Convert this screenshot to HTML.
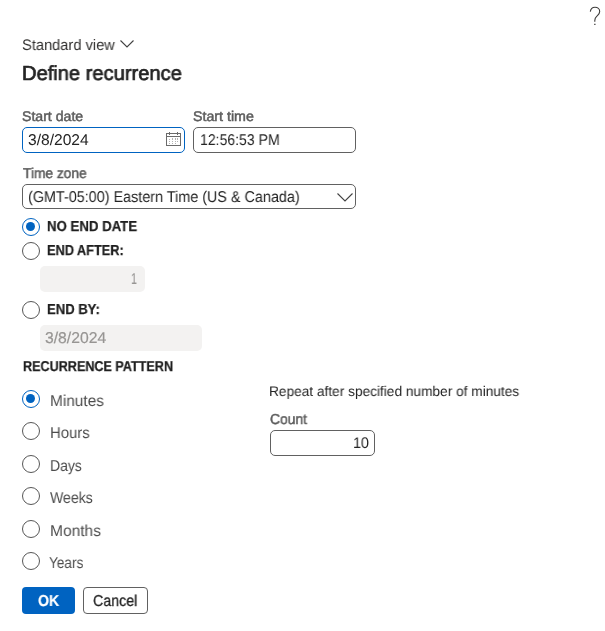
<!DOCTYPE html>
<html><head><meta charset="utf-8">
<style>
html,body{margin:0;padding:0;background:#fff;width:605px;height:631px;overflow:hidden;}
body{position:relative;font-family:"Liberation Sans",sans-serif;}
.t{position:absolute;white-space:nowrap;line-height:1;will-change:transform;text-rendering:geometricPrecision;}
.box{position:absolute;box-sizing:border-box;}
.radio{position:absolute;box-sizing:border-box;width:18px;height:18px;border-radius:50%;border:1px solid #575757;background:#fff;}
.radio.on{border-color:#0063c1;border-width:1.2px;}
.radio.on::after{content:"";position:absolute;left:2.7px;top:3.4px;width:9px;height:9px;border-radius:50%;background:#0063c1;}
</style></head><body>
<!-- help icon -->
<svg class="box" style="left:586px;top:4px" width="18" height="24" viewBox="0 0 18 24">
<path d="M4.3 7.6 C4.7 4.9 6.6 3.3 9 3.3 C11.6 3.3 13.7 5.1 13.7 7.6 C13.7 9.8 12.2 10.9 10.9 12.2 C9.6 13.4 8.8 14.6 8.8 16.4 L8.8 17.8" fill="none" stroke="#3b3a39" stroke-width="1.1"/>
<path d="M8.2 20.4 L9.5 20.4" stroke="#3b3a39" stroke-width="1.1"/>
</svg>
<!-- chevron standard view -->
<svg class="box" style="left:119px;top:39px" width="16" height="10" viewBox="0 0 16 10">
<path d="M1.5 1.5 L8 8 L14.5 1.5" fill="none" stroke="#424242" stroke-width="1.1"/>
</svg>
<!-- start date input -->
<div class="box" style="left:22px;top:127px;width:163px;height:26px;border:1.5px solid #0063c1;border-radius:5px;"></div>
<svg class="box" style="left:162px;top:128px" width="24" height="22" viewBox="0 0 24 22" shape-rendering="crispEdges">
<g fill="none" stroke="#6b6b6b" stroke-width="1">
<rect x="4.5" y="5.5" width="14" height="12"/>
<line x1="4" y1="8.5" x2="19" y2="8.5"/>
<line x1="7.5" y1="4" x2="7.5" y2="7"/><line x1="15.5" y1="4" x2="15.5" y2="7"/>
</g>
<g fill="#b3b3b3">
<rect x="7" y="11" width="1" height="1"/><rect x="7" y="13" width="1" height="1"/><rect x="7" y="15" width="1" height="1"/>
<rect x="10" y="10" width="1" height="2"/><rect x="10" y="13" width="1" height="1"/><rect x="10" y="15" width="1" height="1"/>
<rect x="13" y="10" width="1" height="2"/><rect x="13" y="13" width="1" height="1"/><rect x="13" y="15" width="1" height="1"/>
<rect x="15" y="10" width="1" height="2"/><rect x="15" y="13" width="1" height="1"/>
</g>
</svg>
<!-- start time input -->
<div class="box" style="left:193px;top:127px;width:163px;height:26px;border:1px solid #616161;border-radius:5px;"></div>
<!-- select -->
<div class="box" style="left:22px;top:184px;width:334px;height:25px;border:1px solid #616161;border-radius:5px;"></div>
<svg class="box" style="left:336px;top:191px" width="18" height="12" viewBox="0 0 18 12">
<path d="M1.5 2.5 L9 10 L16.5 2.5" fill="none" stroke="#424242" stroke-width="1.1"/>
</svg>
<!-- radios -->
<div class="radio on" style="left:22px;top:218px"></div>
<div class="radio" style="left:22px;top:242px"></div>
<div class="box" style="left:40px;top:266px;width:105px;height:26px;background:#f3f2f1;border-radius:5px;"></div>
<div class="radio" style="left:22px;top:301px"></div>
<div class="box" style="left:40px;top:325px;width:162px;height:26px;background:#f3f2f1;border-radius:5px;"></div>
<div class="radio on" style="left:22px;top:389.5px"></div>
<div class="radio" style="left:22px;top:422px"></div>
<div class="radio" style="left:22px;top:454.5px"></div>
<div class="radio" style="left:22px;top:487px"></div>
<div class="radio" style="left:22px;top:519.5px"></div>
<div class="radio" style="left:22px;top:552px"></div>
<!-- count input -->
<div class="box" style="left:270px;top:430px;width:105px;height:26px;border:1px solid #616161;border-radius:5px;"></div>
<!-- buttons -->
<div class="box" style="left:22px;top:587px;width:53px;height:27px;background:#0063c1;border-radius:4px;"></div>
<div class="box" style="left:83px;top:587px;width:65px;height:27px;border:1px solid #616161;border-radius:4px;"></div>
<div class="t" id="sv" style="left:22.49px;top:38.01px;font-size:15.25px;letter-spacing:0.000px;color:#323130;transform:scaleX(0.9605);transform-origin:0 0;">Standard view</div>
<div class="t" id="dr" style="left:22.39px;top:64.01px;font-size:20.30px;letter-spacing:0.000px;color:#242424;transform:scaleX(0.9914);transform-origin:0 0;-webkit-text-stroke:0.7px #242424;">Define recurrence</div>
<div class="t" id="lsd" style="left:22.24px;top:109.00px;font-size:14.10px;letter-spacing:0.000px;color:#5c5c5c;transform:scaleX(1.0006);transform-origin:0 0;-webkit-text-stroke:0.5px #5c5c5c;">Start date</div>
<div class="t" id="vsd" style="left:27.85px;top:133.01px;font-size:15.60px;letter-spacing:0.000px;color:#242424;transform:scaleX(1.0001);transform-origin:0 0;">3/8/2024</div>
<div class="t" id="lst" style="left:193.42px;top:109.00px;font-size:14.10px;letter-spacing:0.000px;color:#5c5c5c;transform:scaleX(1.0086);transform-origin:0 0;-webkit-text-stroke:0.5px #5c5c5c;">Start time</div>
<div class="t" id="vst" style="left:200.14px;top:133.01px;font-size:15.60px;letter-spacing:0.000px;color:#242424;transform:scaleX(0.9012);transform-origin:0 0;">12:56:53 PM</div>
<div class="t" id="ltz" style="left:22.83px;top:167.01px;font-size:14.30px;letter-spacing:0.000px;color:#5c5c5c;transform:scaleX(0.9615);transform-origin:0 0;-webkit-text-stroke:0.5px #5c5c5c;">Time zone</div>
<div class="t" id="vtz" style="left:27.82px;top:190.00px;font-size:15.60px;letter-spacing:0.000px;color:#242424;transform:scaleX(0.9222);transform-origin:0 0;">(GMT-05:00) Eastern Time (US &amp; Canada)</div>
<div class="t" id="r1" style="left:47.12px;top:220.01px;font-size:14.50px;letter-spacing:0.000px;color:#1f1f1f;font-weight:bold;transform:scaleX(0.9112);transform-origin:0 0;-webkit-text-stroke:0.25px #1f1f1f;">NO END DATE</div>
<div class="t" id="r2" style="left:46.58px;top:244.01px;font-size:14.50px;letter-spacing:0.000px;color:#1f1f1f;font-weight:bold;transform:scaleX(0.8786);transform-origin:0 0;-webkit-text-stroke:0.25px #1f1f1f;">END AFTER:</div>
<div class="t" id="v1" style="left:131.21px;top:272.01px;font-size:15.60px;letter-spacing:0.000px;color:#979593;transform:scaleX(0.6849);transform-origin:0 0;-webkit-text-stroke:0.2px #979593;">1</div>
<div class="t" id="r3" style="left:46.62px;top:303.00px;font-size:14.50px;letter-spacing:0.000px;color:#1f1f1f;font-weight:bold;transform:scaleX(0.9016);transform-origin:0 0;-webkit-text-stroke:0.25px #1f1f1f;">END BY:</div>
<div class="t" id="v2" style="left:45.03px;top:331.00px;font-size:15.60px;letter-spacing:0.000px;color:#979593;transform:scaleX(1.0080);transform-origin:0 0;-webkit-text-stroke:0.2px #979593;">3/8/2024</div>
<div class="t" id="rp" style="left:22.69px;top:360.01px;font-size:14.30px;letter-spacing:0.000px;color:#1f1f1f;font-weight:bold;transform:scaleX(0.8813);transform-origin:0 0;-webkit-text-stroke:0.25px #1f1f1f;">RECURRENCE PATTERN</div>
<div class="t" id="o1" style="left:49.59px;top:394.00px;font-size:15.80px;letter-spacing:0.000px;color:#4d4d4d;transform:scaleX(0.9729);transform-origin:0 0;">Minutes</div>
<div class="t" id="o2" style="left:49.95px;top:426.01px;font-size:15.80px;letter-spacing:0.000px;color:#4d4d4d;transform:scaleX(0.9417);transform-origin:0 0;">Hours</div>
<div class="t" id="o3" style="left:49.75px;top:459.00px;font-size:15.80px;letter-spacing:0.000px;color:#4d4d4d;transform:scaleX(0.8842);transform-origin:0 0;">Days</div>
<div class="t" id="o4" style="left:49.80px;top:491.00px;font-size:15.80px;letter-spacing:0.000px;color:#4d4d4d;transform:scaleX(0.8916);transform-origin:0 0;">Weeks</div>
<div class="t" id="o5" style="left:49.58px;top:524.00px;font-size:15.80px;letter-spacing:0.000px;color:#4d4d4d;transform:scaleX(0.9837);transform-origin:0 0;">Months</div>
<div class="t" id="o6" style="left:49.29px;top:556.01px;font-size:15.80px;letter-spacing:0.000px;color:#4d4d4d;transform:scaleX(0.8623);transform-origin:0 0;">Years</div>
<div class="t" id="rep" style="left:269.11px;top:384.01px;font-size:14.00px;letter-spacing:0.000px;color:#242424;transform:scaleX(0.9771);transform-origin:0 0;">Repeat after specified number of minutes</div>
<div class="t" id="cnt" style="left:269.96px;top:413.00px;font-size:14.40px;letter-spacing:0.000px;color:#5c5c5c;transform:scaleX(0.9589);transform-origin:0 0;-webkit-text-stroke:0.5px #5c5c5c;">Count</div>
<div class="t" id="v10" style="left:352.81px;top:436.00px;font-size:15.40px;letter-spacing:0.000px;color:#242424;transform:scaleX(0.9325);transform-origin:0 0;">10</div>
<div class="t" id="ok" style="left:38.02px;top:594.01px;font-size:15.80px;letter-spacing:0.000px;color:#ffffff;font-weight:bold;transform:scaleX(0.8958);transform-origin:0 0;-webkit-text-stroke:0.2px #ffffff;">OK</div>
<div class="t" id="cn" style="left:93.04px;top:594.01px;font-size:15.80px;letter-spacing:0.000px;color:#242424;transform:scaleX(0.8997);transform-origin:0 0;-webkit-text-stroke:0.3px #242424;">Cancel</div>
</body></html>
